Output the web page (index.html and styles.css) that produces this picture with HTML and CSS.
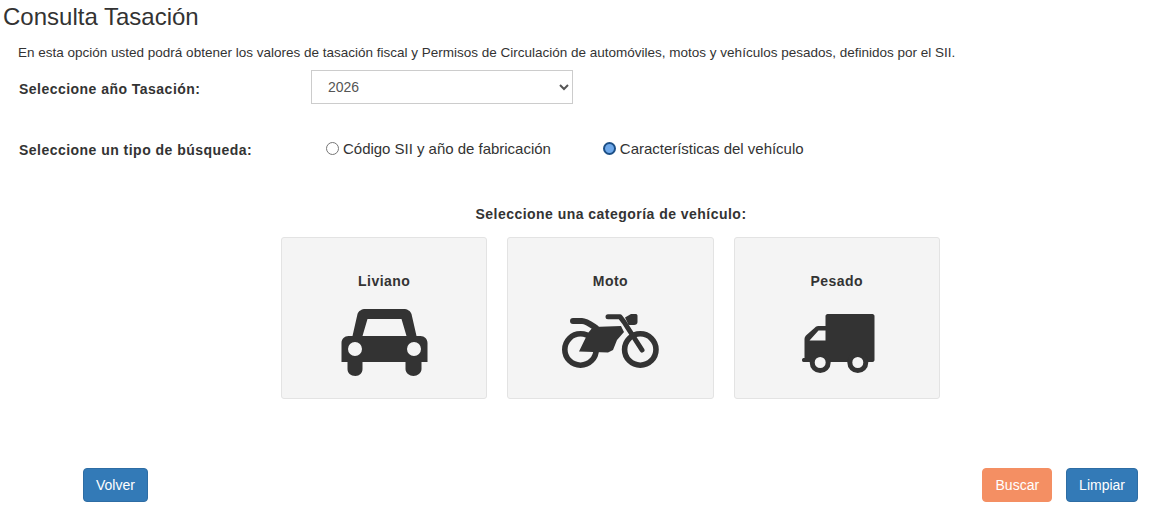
FILE: index.html
```html
<!DOCTYPE html>
<html>
	<head>
		<meta charset="utf-8">
		<title>Consulta Tasación</title>
		<link rel="stylesheet" href="styles.css">
	</head>
	<body>
		<h1 class="title">Consulta Tasación</h1>
		<p class="intro">En esta opción usted podrá obtener los valores de tasación fiscal y Permisos de Circulación de automóviles, motos y vehículos pesados, definidos por el SII.</p>
		<!-- año -->
		<div class="row rowYear">
			<label class="rowLabel">Seleccione año Tasación:</label>
			<select class="yearSelect">
				<option>2026</option>
			</select>
		</div>
		<!-- tipo de busqueda -->
		<div class="row rowType">
			<label class="rowLabel">Seleccione un tipo de búsqueda:</label>
			<div class="radios">
				<label class="radioItem"><input type="radio" name="tipo">Código SII y año de fabricación</label>
				<label class="radioItem"><input type="radio" name="tipo" checked>Características del vehículo</label>
			</div>
		</div>
		<h2 class="catTitle">Seleccione una categoría de vehículo:</h2>
		<div class="cards">
			<div class="card">
				<span class="cardName">Liviano</span>
				<svg class="icon" width="97" height="67" viewBox="-5.5 0 97 67">
					<path fill-rule="evenodd" d="M24 0H62C66 0 69 2 70 5L75 27H79C83 27 86 30 86 34V53H80V60C80 64 76 67 72 67C68 67 64 64 64 60V53H21V60C21 64 18 67 14 67C9 67 6 64 6 60V53H0V34C0 30 3 27 7 27H11L16 5C17 2 20 0 24 0ZM26 10L21 27H65L60 10ZM13.5 33A7 7 0 1 0 13.5 47A7 7 0 1 0 13.5 33ZM72.5 33A7 7 0 1 0 72.5 47A7 7 0 1 0 72.5 33Z" />
				</svg>
			</div>
			<div class="card">
				<span class="cardName">Moto</span>
				<svg class="icon" width="97" height="67" viewBox="0 -5 97 67">
					<circle cx="18.5" cy="35.5" r="15.7" fill="none" stroke="#333" stroke-width="5.6" />
					<circle cx="78.3" cy="35.5" r="15.7" fill="none" stroke="#333" stroke-width="5.6" />
					<path d="M11 7H20C24 7 28 10 34 14" fill="none" stroke="#333" stroke-width="6" stroke-linecap="round" />
					<path d="M31 13L59 12L62 18L55 26L51 36L46 38.5L17 37.5L26 19Z" />
					<path d="M46 2.700H58L62 8L80 36" fill="none" stroke="#333" stroke-width="5" stroke-linecap="round" stroke-linejoin="round" />
					<path d="M63 3.500L69 0H74C75 0 75.500 1 75.500 2V8C75.500 10 74 11 72 11H66.500Z" />
				</svg>
			</div>
			<div class="card">
				<span class="cardName">Pesado</span>
				<svg class="icon" width="97" height="67" viewBox="-13.5 -5 97 67">
					<path fill-rule="evenodd" d="M26 0H71C72 0 73 1 73 2V46C73 47 72 48 71 48H5H2C0 48 0 44 2 44H3V25C3 23 4 22 5 21L13 14C15 12 16 12 18 12H24V2C24 1 25 0 26 0ZM8 26.500H24V16.500H17Z" />
					<circle cx="18.700" cy="48.500" r="8" fill="#f4f4f4" stroke="#333" stroke-width="5" />
					<circle cx="56.300" cy="48.500" r="8" fill="#f4f4f4" stroke="#333" stroke-width="5" />
				</svg>
			</div>
		</div>
		<div class="actions">
			<button class="btn btnBlue">Volver</button>
			<div class="actionsRight">
				<button class="btn btnOrange">Buscar</button>
				<button class="btn btnBlue">Limpiar</button>
			</div>
		</div>
	</body>
</html>
```

FILE: styles.css
```css
* {
	margin: 0;
	padding: 0;
	box-sizing: border-box;
}
body {
	font-family: "Liberation Sans", Arial, sans-serif;
	font-size: 14px;
	color: #333;
	background-color: #fff;
	height: 517px;
	overflow: hidden;
}
.title {
	font-size: 24px;
	font-weight: normal;
	line-height: 26px;
	padding: 4px 0 0 3px;
}
.intro {
	font-size: 13.5px;
	line-height: 20px;
	padding: 13px 0 0 18px;
}
.row {
	display: flex;
	align-items: center;
	padding-left: 19px;
}
.rowYear {
	margin-top: 7px;
}
.rowType {
	margin-top: 27px;
}
.rowLabel {
	width: 292px;
	padding-top: 3px;
	font-weight: bold;
	letter-spacing: 0.47px;
}
.yearSelect {
	width: 262px;
	height: 34px;
	padding-left: 12px;
	font-family: "Liberation Sans", Arial, sans-serif;
	font-size: 14px;
	color: #555;
	background-color: #fff;
	border: 1px solid #ccc;
}
.radios {
	display: flex;
	gap: 52px;
	padding-left: 15px;
	height: 34px;
	align-items: center;
}
.radioItem {
	display: flex;
	align-items: center;
	font-size: 15px;
	letter-spacing: -0.02px;
}
.radioItem input {
	appearance: none;
	width: 13px;
	height: 13px;
	margin-right: 4px;
	border: 1px solid #767676;
	border-radius: 50%;
	background-color: #fff;
}
.radioItem input:checked {
	border: 2px solid #1c4f86;
	background-color: #6ea8ea;
}
.catTitle {
	font-size: 14px;
	font-weight: bold;
	text-align: center;
	line-height: 20px;
	margin: 39px 0 0 72px;
	letter-spacing: 0.47px;
}
.cards {
	display: flex;
	justify-content: center;
	gap: 20px;
	margin: 13px 0 0 71px;
}
.card {
	width: 206.300px;
	height: 162px;
	background-color: #f4f4f4;
	border: 1px solid #e3e3e3;
	border-radius: 3px;
	display: flex;
	flex-direction: column;
	align-items: center;
	padding-top: 33px;
}
.cardName {
	font-size: 14px;
	font-weight: bold;
	line-height: 20px;
	letter-spacing: 0.47px;
}
.icon {
	fill: #333;
	margin-top: 18px;
}
.actions {
	display: flex;
	justify-content: space-between;
	margin-top: 69px;
	padding: 0 12px 0 83px;
}
.actionsRight {
	display: flex;
	gap: 14px;
}
.btn {
	height: 34px;
	padding: 0 12px;
	font-family: "Liberation Sans", Arial, sans-serif;
	font-size: 14px;
	color: #fff;
	border: 1px solid transparent;
	border-radius: 4px;
}
.btnBlue {
	background-color: #337ab7;
	border-color: #2e6da4;
}
.btnOrange {
	padding-left: 13px;
	background-color: #f48f63;
	border-color: #f48f63;
}
```
